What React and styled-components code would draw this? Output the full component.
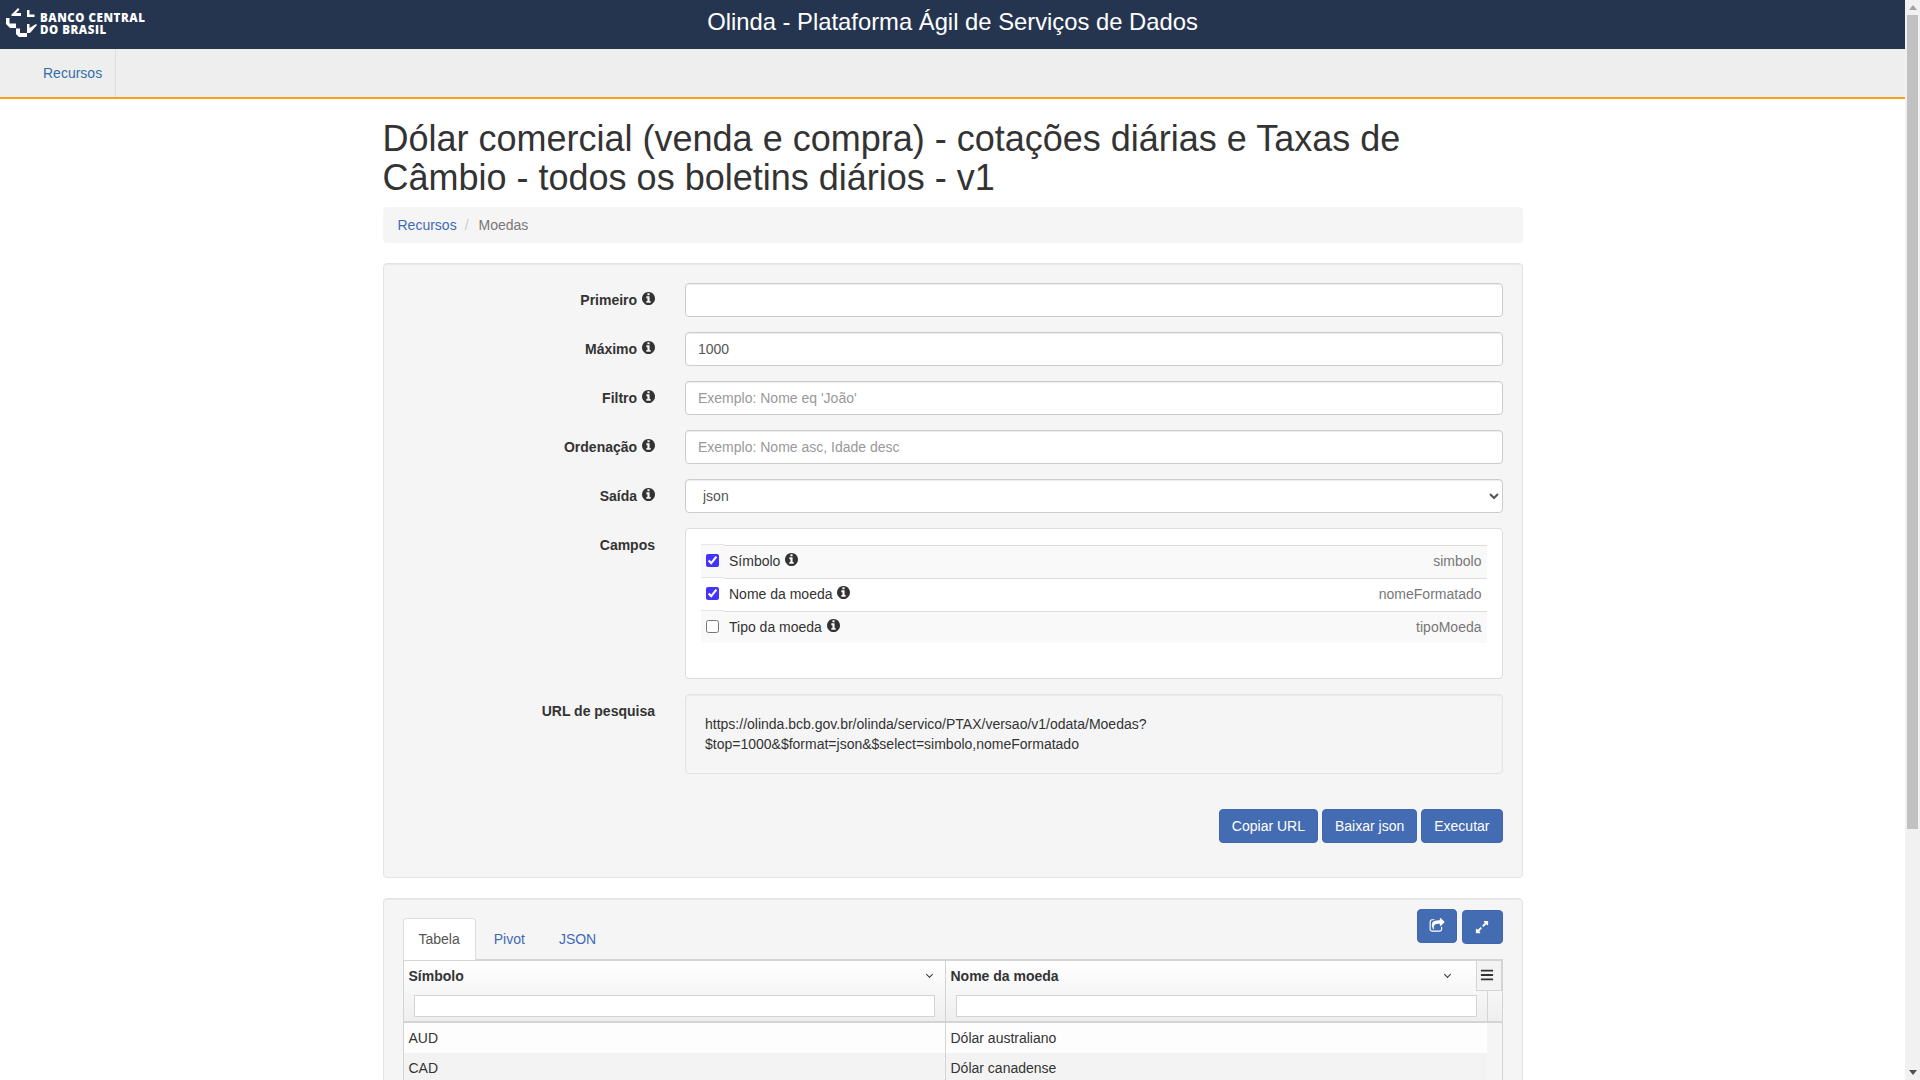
import styled, { createGlobalStyle } from "styled-components"
import { FaExpandAlt, FaBars } from "react-icons/fa"

const fields = [
  { label: "Símbolo", name: "simbolo", checked: true },
  { label: "Nome da moeda", name: "nomeFormatado", checked: true },
  { label: "Tipo da moeda", name: "tipoMoeda", checked: false },
]

const moedas = [
  ["AUD", "Dólar australiano"],
  ["CAD", "Dólar canadense"],
  ["CHF", "Franco suíço"],
  ["DKK", "Coroa dinamarquesa"],
  ["EUR", "Euro"],
  ["GBP", "Libra esterlina"],
  ["JPY", "Iene"],
  ["NOK", "Coroa norueguesa"],
  ["SEK", "Coroa sueca"],
  ["USD", "Dólar dos Estados Unidos"],
]

function Logo() {
  return (
    <LogoBox>
      <svg width="32" height="32" viewBox="5 6 32 32" fill="#fff">
        <path d="M18 8l1.5 1.5-3.5 3.5h5v3h-9l-1-1z" />
        <path d="M27 10h2.5v4.5h5v2.5h-7.5z" />
        <path d="M6 18h3.5v5.5h6.5v4.5h-6l-4-4z" />
        <path d="M16 28.500h4v4.500h7v4h-8l-3-3z" />
        <path d="M27 24h2.500v4l6.500-4 1 1-7 8h-3z" />
      </svg>
      <LogoText>BANCO CENTRAL<br />DO BRASIL</LogoText>
    </LogoBox>
  )
}

function InfoIcon() {
  return (
    <InfoSvg viewBox="128 128 1536 1536" fill="currentColor">
      <path d="M1152 1376v-160q0-14-9-23t-23-9h-96v-512q0-14-9-23t-23-9h-320q-14 0-23 9t-9 23v160q0 14 9 23t23 9h96v320h-96q-14 0-23 9t-9 23v160q0 14 9 23t23 9h448q14 0 23-9t9-23zm-128-896v-160q0-14-9-23t-23-9h-192q-14 0-23 9t-9 23v160q0 14 9 23t23 9h192q14 0 23-9t9-23zm640 416q0 209-103 385.5t-279.5 279.5-385.5 103-385.5-103-279.5-279.5-103-385.5 103-385.5 279.5-279.5 385.5-103 385.5 103 279.5 279.5 103 385.5z" />
    </InfoSvg>
  )
}

function ShareIcon() {
  return (
    <svg width="16" height="16" viewBox="0 0 1792 1792" fill="currentColor">
      <path d="M1472 989v259q0 119-84.5 203.5t-203.5 84.5h-832q-119 0-203.5-84.5t-84.5-203.5v-832q0-119 84.5-203.5t203.5-84.5h255q13 0 22.5 9.5t9.5 22.5q0 27-26 32-77 26-133 60-10 4-16 4h-112q-66 0-113 47t-47 113v832q0 66 47 113t113 47h832q66 0 113-47t47-113v-214q0-19 18-29 28-13 54-37 16-16 35-8 21 9 21 29zm237-496l-384 384q-18 19-45 19-12 0-25-5-39-17-39-59v-192h-160q-323 0-438 131-119 137-74 473 3 23-20 34-8 2-12 2-16 0-26-13-10-14-21-31t-39.5-68.5-49.5-99.5-38.5-114-17.5-122q0-49 3.5-91t14-90 28-88 47-81.5 68.5-74 94.5-61.5 124.5-48.5 159.5-30.5 196.5-11h160v-192q0-42 39-59 13-5 25-5 26 0 45 19l384 384q19 19 19 45t-19 45z" />
    </svg>
  )
}

function Label({ children }) {
  return (
    <FieldLabel>{children} <InfoIcon /></FieldLabel>
  )
}

export default function App() {
  return (
    <>
      <GlobalStyle />
      <TopBar>
        <Logo />
        <TopTitle>Olinda - Plataforma Ágil de Serviços de Dados</TopTitle>
      </TopBar>
      <NavBar>
        <NavItem href="#">Recursos</NavItem>
      </NavBar>
      <Container>
        <Title>Dólar comercial (venda e compra) - cotações diárias e Taxas de Câmbio - todos os boletins diários - v1</Title>
        <Breadcrumb>
          <a href="#">Recursos</a>
          <Slash>/</Slash>
          <span>Moedas</span>
        </Breadcrumb>

        <Well>
          <FormRow>
            <Label>Primeiro</Label>
            <Input type="text" />
          </FormRow>
          <FormRow>
            <Label>Máximo</Label>
            <Input type="text" defaultValue="1000" />
          </FormRow>
          <FormRow>
            <Label>Filtro</Label>
            <Input type="text" placeholder="Exemplo: Nome eq 'João'" />
          </FormRow>
          <FormRow>
            <Label>Ordenação</Label>
            <Input type="text" placeholder="Exemplo: Nome asc, Idade desc" />
          </FormRow>
          <FormRow>
            <Label>Saída</Label>
            <Select defaultValue="json">
              <option>json</option>
              <option>csv</option>
              <option>xml</option>
            </Select>
          </FormRow>
          <FormRow>
            <FieldLabel>Campos</FieldLabel>
            <FieldsBox>
              {fields.map((f) => (
                <FieldRow key={f.name}>
                  <CheckCell>
                    <Check type="checkbox" defaultChecked={f.checked} />
                  </CheckCell>
                  <FieldCell>
                    <FieldName>{f.label} <InfoIcon /></FieldName>
                    <FieldKey>{f.name}</FieldKey>
                  </FieldCell>
                </FieldRow>
              ))}
            </FieldsBox>
          </FormRow>
          <FormRow>
            <FieldLabel>URL de pesquisa</FieldLabel>
            <UrlBox>
              https://olinda.bcb.gov.br/olinda/servico/PTAX/versao/v1/odata/Moedas?<br />
              $top=1000&amp;$format=json&amp;$select=simbolo,nomeFormatado
            </UrlBox>
          </FormRow>
          <Actions>
            <Button>Copiar URL</Button>
            <Button>Baixar json</Button>
            <Button>Executar</Button>
          </Actions>
        </Well>

        <ResultWell>
          <ResultTools>
            <IconButton><ShareIcon /></IconButton>
            <IconButton $low><FaExpandAlt /></IconButton>
          </ResultTools>
          <Tabs>
            <Tab $active>Tabela</Tab>
            <Tab>Pivot</Tab>
            <Tab>JSON</Tab>
          </Tabs>
          <Grid>
            <GridHead>
              <HeadCell>
                <HeadTitle>Símbolo<Chevron /></HeadTitle>
                <FilterInput type="text" />
              </HeadCell>
              <HeadCell>
                <HeadTitle $wide>Nome da moeda<Chevron /></HeadTitle>
                <FilterInput type="text" />
              </HeadCell>
              <Gutter />
              <MenuButton><FaBars /></MenuButton>
            </GridHead>
            <GridBody>
              {moedas.map((m, i) => (
                <GridRow key={m[0]} $odd={i % 2 === 1}>
                  <GridCell>{m[0]}</GridCell>
                  <GridCell>{m[1]}</GridCell>
                </GridRow>
              ))}
            </GridBody>
          </Grid>
        </ResultWell>
      </Container>
      <ScrollTrack>
        <ScrollArrow />
        <ScrollThumb />
        <ScrollArrow $down />
      </ScrollTrack>
    </>
  )
}

const GlobalStyle = createGlobalStyle`
  * { box-sizing: border-box; }
  body {
    margin: 0;
    padding-right: 15px;
    background: #fff;
    color: #333;
    font-family: "Liberation Sans", Arial, sans-serif;
    font-size: 14px;
    line-height: 20px;
  }
  a { text-decoration: none; }
`

const ScrollTrack = styled.div`
  position: fixed;
  top: 0;
  right: 0;
  bottom: 0;
  width: 15px;
  display: flex;
  flex-direction: column;
  justify-content: space-between;
  align-items: center;
  background: #f1f1f1;
`
const ScrollThumb = styled.div`
  position: absolute;
  top: 15px;
  left: 2px;
  width: 11px;
  height: 814px;
  background: #c1c1c1;
`
const ScrollArrow = styled.i`
  margin: ${(p) => (p.$down ? "0 0 5px" : "5px 0 0")};
  border-left: 4px solid transparent;
  border-right: 4px solid transparent;
  border-top: ${(p) => (p.$down ? "5px solid #505050" : "0")};
  border-bottom: ${(p) => (p.$down ? "0" : "5px solid #a3a3a3")};
`
const TopBar = styled.header`
  position: relative;
  height: 49px;
  background: #26354f;
  display: flex;
  align-items: center;
  justify-content: center;
`
const LogoBox = styled.div`
  position: absolute;
  left: 5px;
  top: 6px;
  display: flex;
  align-items: center;
  gap: 3px;
`
const LogoText = styled.div`
  margin-top: 4px;
  font-family: "Open Sans", sans-serif;
  font-size: 11.5px;
  font-weight: 800;
  line-height: 12px;
  letter-spacing: 0.55px;
  color: #fff;
`
const TopTitle = styled.div`
  font-size: 23.8px;
  color: #fff;
  line-height: 26px;
  margin-top: -6px;
`
const NavBar = styled.nav`
  height: 50px;
  display: flex;
  background: #eee;
  border-bottom: 2px solid #f5a11c;
`
const NavItem = styled.a`
  padding: 14px 13px 0 43px;
  color: #336ea8;
  border-right: 1px solid #ddd;
`
const Container = styled.main`
  width: 1140px;
  margin: 0 auto;
`
const Title = styled.h1`
  margin: 20px 0 10px;
  font-size: 36px;
  line-height: 39px;
  font-weight: 500;
  color: #333;
`
const Breadcrumb = styled.div`
  height: 36px;
  padding: 8px 15px;
  margin-bottom: 20px;
  background: #f5f5f5;
  border-radius: 4px;
  color: #777;
  a { color: #3f6ab5; }
`
const Slash = styled.span`
  padding: 0 10px 0 8px;
  color: #ccc;
`
const Well = styled.section`
  padding: 19px;
  margin-bottom: 20px;
  background: #f5f5f5;
  border: 1px solid #e3e3e3;
  border-radius: 4px;
  box-shadow: inset 0 1px 1px rgba(0, 0, 0, 0.05);
`
const ResultWell = styled(Well)`
  position: relative;
  height: 495px;
  margin-bottom: 0;
`
const FormRow = styled.div`
  display: grid;
  grid-template-columns: 252.5px 1fr;
  column-gap: 30px;
  margin-bottom: 15px;
`
const FieldLabel = styled.label`
  padding-top: 7px;
  text-align: right;
  font-weight: 700;
`
const InfoSvg = styled.svg`
  width: 13px;
  height: 13px;
  vertical-align: 0;
  margin-left: 1px;
`
const Input = styled.input`
  display: block;
  width: 100%;
  height: 34px;
  padding: 6px 12px;
  font: inherit;
  color: #555;
  background: #fff;
  border: 1px solid #ccc;
  border-radius: 4px;
  box-shadow: inset 0 1px 1px rgba(0, 0, 0, 0.075);
  &::placeholder { color: #999; opacity: 1; }
`
const Select = styled.select`
  display: block;
  width: 100%;
  height: 34px;
  padding: 6px 13px;
  font: inherit;
  color: #555;
  background: #fff;
  border: 1px solid #ccc;
  border-radius: 4px;
  box-shadow: inset 0 1px 1px rgba(0, 0, 0, 0.075);
`
const FieldsBox = styled.div`
  height: 151px;
  padding: 16px 15px;
  background: #fff;
  border: 1px solid #ddd;
  border-radius: 4px;
`
const FieldRow = styled.div`
  height: 33px;
  display: flex;
  &:nth-child(odd) { background: #f9f9f9; }
  &:last-child { height: 32px; }
`
const CheckCell = styled.div`
  width: 23px;
  flex: none;
  margin-top: -1px;
  padding: 9px 0 0 5px;
  border-top: 1px solid #e6e6e6;
  background: inherit;
`
const Check = styled.input`
  display: block;
  width: 13px;
  height: 13px;
  margin: 0;
  accent-color: #4433ff;
`
const FieldCell = styled.div`
  flex: 1;
  display: flex;
  align-items: center;
  padding: 0 5px 2px 5px;
  border-top: 1px solid #ddd;
`
const FieldName = styled.span`
  flex: 1;
`
const FieldKey = styled.span`
  color: #777;
`
const UrlBox = styled.div`
  height: 80px;
  padding: 19px;
  background: #f5f5f5;
  border: 1px solid #e3e3e3;
  border-radius: 4px;
  box-shadow: inset 0 1px 1px rgba(0, 0, 0, 0.05);
`
const Actions = styled.div`
  display: flex;
  justify-content: flex-end;
  gap: 4px;
  margin: 35px 0 15px;
`
const Button = styled.button`
  height: 34px;
  padding: 6px 12px;
  font: inherit;
  color: #fff;
  background: #446cb3;
  border: 1px solid #4067ad;
  border-radius: 4px;
`
const ResultTools = styled.div`
  position: absolute;
  top: 10px;
  right: 19px;
  display: flex;
  gap: 5px;
`
const IconButton = styled.button`
  width: ${(p) => (p.$low ? "41px" : "40px")};
  height: 34px;
  margin-top: ${(p) => (p.$low ? "1px" : "0")};
  padding: 0;
  display: flex;
  align-items: center;
  justify-content: center;
  font-size: 14px;
  color: #fff;
  background: #446cb3;
  border: 1px solid #4067ad;
  border-radius: 4px;
`
const Tabs = styled.div`
  display: flex;
  height: 42px;
  gap: 2px;
`
const Tab = styled.a`
  height: 42px;
  padding: 10px 15px;
  border: 1px solid ${(p) => (p.$active ? "#ddd" : "transparent")};
  border-bottom: 0;
  border-radius: 4px 4px 0 0;
  background: ${(p) => (p.$active ? "#fff" : "transparent")};
  color: ${(p) => (p.$active ? "#555" : "#3f6ab5")};
  position: relative;
  z-index: 1;
`
const Grid = styled.div`
  border: 1px solid #d4d4d4;
  border-top-width: 2px;
  margin-top: -1px;
`
const GridHead = styled.div`
  position: relative;
  display: grid;
  grid-template-columns: 542px 541px 1fr;
  height: 62px;
  border-bottom: 2px solid #d4d4d4;
  background: linear-gradient(#fff, #eee);
`
const HeadCell = styled.div`
  padding: 3px 0 0 5px;
  border-right: 1px solid #d4d4d4;
  &:nth-child(2) { border-right: 0; }
`
const HeadTitle = styled.div`
  display: flex;
  justify-content: space-between;
  align-items: center;
  height: 24px;
  padding-right: ${(p) => (p.$wide ? "37px" : "13px")};
  font-weight: 700;
`
const Chevron = styled.i`
  width: 5px;
  height: 5px;
  margin-top: -3px;
  border-right: 1px solid #333;
  border-bottom: 1px solid #333;
  transform: rotate(45deg);
`
const FilterInput = styled.input`
  display: block;
  width: 521px;
  height: 22px;
  margin: 7px 0 0 5px;
  padding: 0 4px;
  font: inherit;
  background: #fff;
  border: 1px solid #d4d4d4;
`
const Gutter = styled.div`
  margin-top: 30px;
  border-left: 1px solid #d4d4d4;
`
const MenuButton = styled.div`
  position: absolute;
  top: 0;
  right: 0;
  width: 26px;
  height: 30px;
  padding: 7px 0 0 3px;
  font-size: 14px;
  line-height: 14px;
  color: #333;
  background: #f3f3f3;
  border: 1px solid #d4d4d4;
  border-top: 0;
`
const GridBody = styled.div`
  height: 339px;
  padding-right: 15px;
  background: #f5f5f5;
`
const GridRow = styled.div`
  display: grid;
  grid-template-columns: 542px 1fr;
  height: 30px;
  background: ${(p) => (p.$odd ? "#f3f3f3" : "#fdfdfd")};
`
const GridCell = styled.div`
  padding: 5px;
  &:first-child { border-right: 1px solid #d4d4d4; }
`
